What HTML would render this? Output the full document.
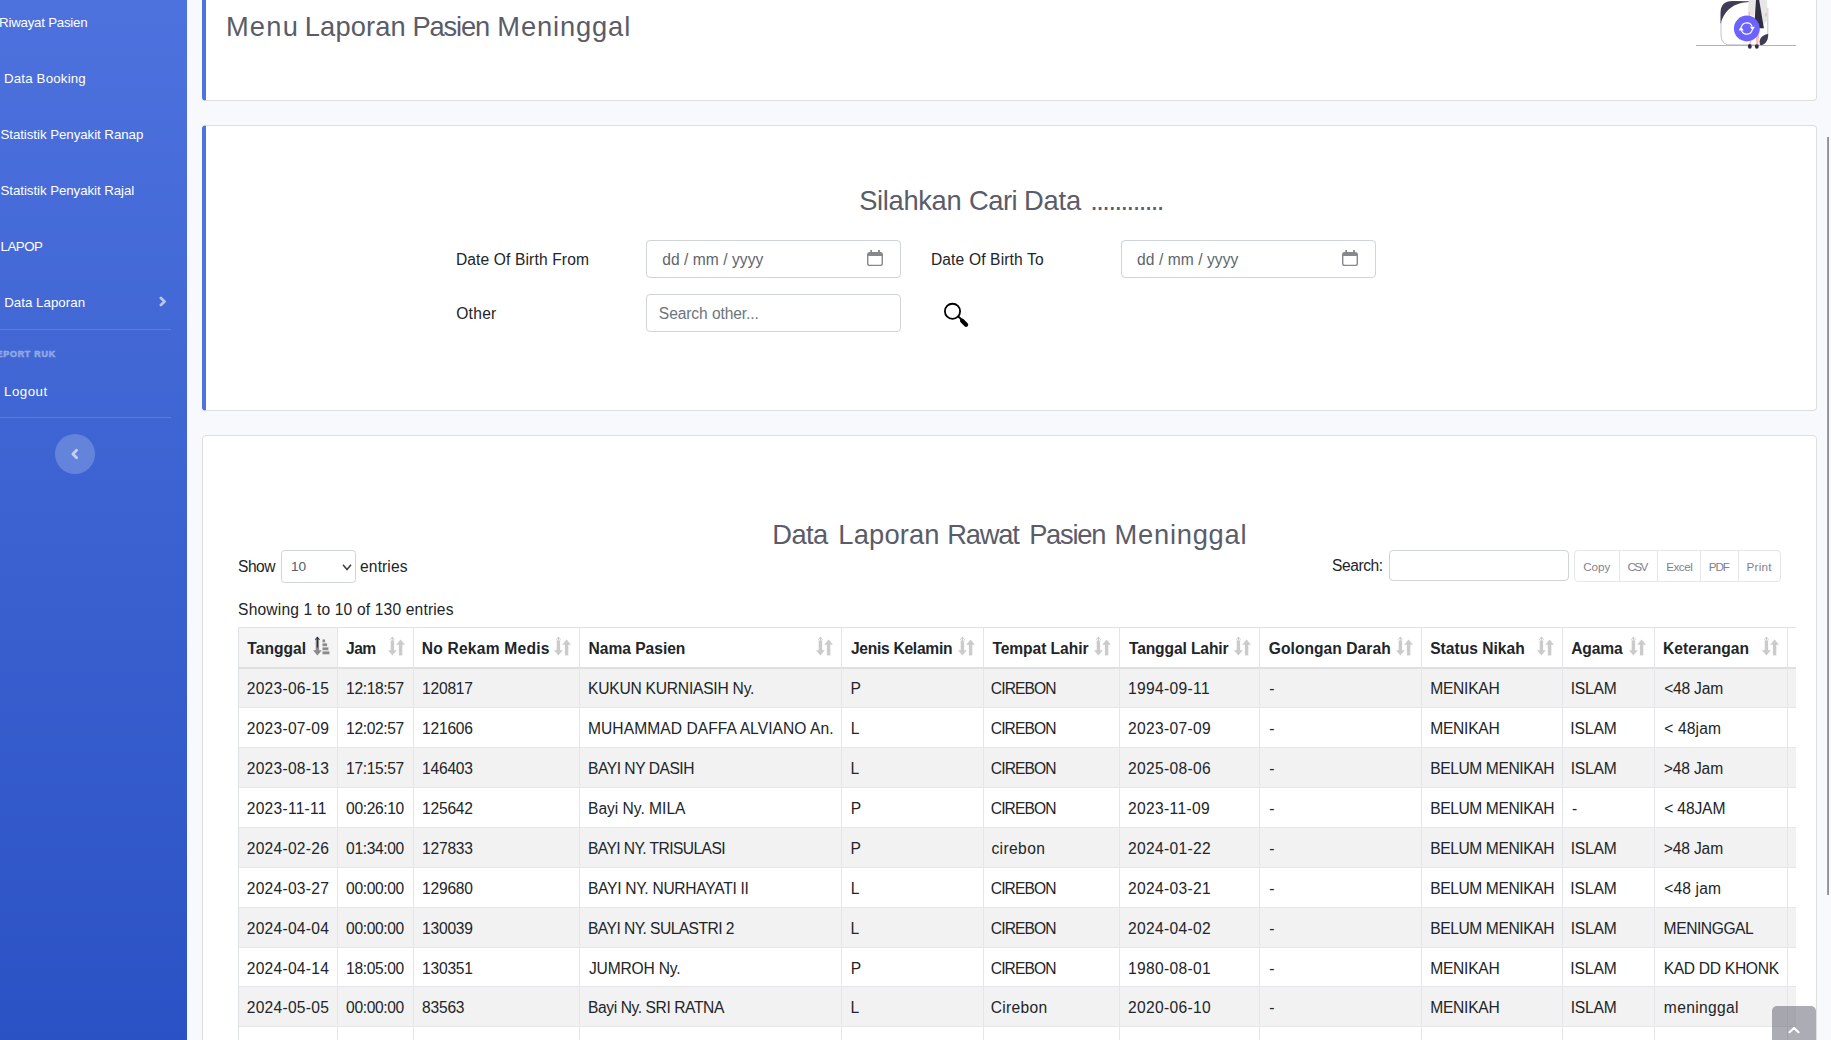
<!DOCTYPE html>
<html lang="id">
<head>
<meta charset="utf-8">
<title>Menu Laporan Pasien Meninggal</title>
<style>
*{box-sizing:border-box}
html,body{margin:0;padding:0}
body{width:1831px;height:1040px;overflow:hidden;background:#f8f9fc;font-family:"Liberation Sans",sans-serif;color:#212529;position:relative;font-size:15.6px}
#sidebar{position:absolute;left:0;top:0;width:187px;height:1040px;background:linear-gradient(180deg,#4d72de 0%,#2b52c4 100%);overflow:hidden}
#sidebar .item{position:absolute;left:0;color:#fff;font-size:13.3px;white-space:nowrap;line-height:20px;height:20px}
#sidebar hr{position:absolute;left:0;width:171px;margin:0;border:0;border-top:1px solid rgba(255,255,255,.15)}
#sidebar .heading{position:absolute;left:-10.6px;top:347.5px;font-size:8.9px;font-weight:700;color:#fff;-webkit-text-stroke:.5px #fff;opacity:.42;letter-spacing:.78px;line-height:12px;white-space:nowrap}
#toggle{position:absolute;left:55px;top:434px;width:40px;height:40px;border-radius:50%;background:rgba(255,255,255,.2)}
.card{position:absolute;background:#fff;border:1px solid #dedede;border-radius:4px}
.card.bl{border-left:4px solid #4e73df}
h3{margin:0;font-weight:400;color:#5a5c69;font-size:27.3px;line-height:34px;white-space:nowrap;position:absolute}
.lbl{position:absolute;font-size:15.6px;line-height:24px;white-space:nowrap;color:#212529}
.inp{position:absolute;height:38px;width:255px;border:1px solid #ced4da;border-radius:4px;background:#fff;color:#5f646b;font-size:15.6px;line-height:38px;padding-left:15px;white-space:nowrap}

#tw{position:absolute;left:238px;top:627px;width:1558px;height:420px;overflow:hidden}
#dt{border-collapse:separate;border-spacing:0;table-layout:fixed;width:1662px;font-size:15.6px;color:#212529}
#dt th,#dt td{padding:0 0 0 8px;border-left:1px solid #e4e6e9;border-top:1px solid #e4e6e9;white-space:nowrap;overflow:visible;text-align:left}
#dt th{height:40px;border-top:1px solid #dee2e6;font-weight:700;position:relative;line-height:37px;padding-top:2px}
#dt th.sorted{background:#f5f5f5}
#dt td{height:40px;line-height:39px}
#dt tr.first td{border-top:2px solid #dedfe0;line-height:38px}
#dt tr.short td{height:39px;line-height:37px}
#dt tr.odd td{background:#f2f2f2}
#dt td .f{top:1px}
#dt th:first-child,#dt td:first-child{border-left:1px solid #dee2e6}
#dt th .so{position:absolute;right:7px;top:7.5px}
#dt th.sorted .so{right:6.2px}

.ctl{position:absolute;font-size:15.6px;line-height:24px;white-space:nowrap;color:#212529}
#len{position:absolute;left:281px;top:550px;width:75px;height:33px;border:1px solid #ced4da;border-radius:3.5px;background:#fff;color:#5a5d68;font-size:13.7px;line-height:32px;padding-left:9px}
#sinp{position:absolute;left:1389px;top:550px;width:180px;height:31px;border:1px solid #ced4da;border-radius:4px;background:#fff}
#btns{position:absolute;left:1574px;top:550px;width:207px;height:32px;border:1px solid #e3e6ea;border-radius:4px;background:#fff;font-size:11.7px;color:#7f8190}
#btns span{position:absolute;top:0;height:30px;line-height:32px;border-left:1px solid #e3e6ea;text-align:center}
#btns span:first-child{border-left:0}
.cal{position:absolute}
#totop{position:absolute;left:1772px;top:1006px;width:44px;height:44px;border-radius:5px;background:rgba(90,92,105,.5)}
#sb{position:absolute;left:1827px;top:137px;width:2px;height:758px;background:linear-gradient(90deg,#a19c94 0,#a19c94 50%,#8f9195 50%,#8f9195 100%)}
.f{display:inline-block;position:relative;white-space:pre}
#btns span.f{position:relative;border:0;top:auto;height:auto;line-height:inherit}
</style>
</head>
<body>
<div id="sidebar">
  <div class="item" style="top:13px;left:0"><span class="f" style="letter-spacing:-0.243px;left:-0.90px">Riwayat Pasien</span></div>
  <div class="item" style="top:69px;left:5px"><span class="f" style="letter-spacing:0.183px;left:-1.10px">Data Booking</span></div>
  <div class="item" style="top:125px;left:1px"><span class="f" style="letter-spacing:-0.055px;left:-0.57px">Statistik Penyakit Ranap</span></div>
  <div class="item" style="top:181px;left:1px"><span class="f" style="letter-spacing:-0.068px;left:-0.44px">Statistik Penyakit Rajal</span></div>
  <div class="item" style="top:237px;left:1px"><span class="f" style="letter-spacing:-0.489px;left:-0.47px">LAPOP</span></div>
  <div class="item" style="top:293px;left:5px"><span class="f" style="letter-spacing:0.028px;left:-0.87px">Data Laporan</span></div>
  <svg style="position:absolute;left:159px;top:296px" width="9" height="11" viewBox="0 0 9 11"><path d="M1.9 2 L5.5 5.5 L1.9 9" fill="none" stroke="rgba(255,255,255,.62)" stroke-width="2.7" stroke-linecap="round" stroke-linejoin="round"/></svg>
  <hr style="top:329px">
  <div class="heading">REPORT RUK</div>
  <div class="item" style="top:382px;left:5px"><span class="f" style="letter-spacing:0.481px;left:-0.99px">Logout</span></div>
  <hr style="top:417px">
  <div id="toggle"><svg style="position:absolute;left:15px;top:14px" width="9" height="12" viewBox="0 0 9 12"><path d="M6.6 2.3 L2.9 6 L6.6 9.7" fill="none" stroke="rgba(255,255,255,.62)" stroke-width="2.8" stroke-linecap="round" stroke-linejoin="round"/></svg></div>
</div>

<div class="card bl" style="left:202px;top:-40px;width:1615px;height:141px"></div>
<h3 style="left:227px;top:10px"><span class="f" style="letter-spacing:1.259px;left:-1.14px">Menu</span> <span class="f" style="letter-spacing:0.119px;left:-3.12px">Laporan</span> <span class="f" style="letter-spacing:-1.125px;left:-4.13px">Pasien</span> <span class="f" style="letter-spacing:0.862px;left:-3.51px">Meninggal</span></h3>

<div class="card bl" style="left:202px;top:125px;width:1615px;height:286px"></div>
<h3 style="left:859px;top:184px"><span class="f" style="letter-spacing:-0.319px;left:0.20px">Silahkan</span> <span class="f" style="letter-spacing:-0.544px;left:0.32px">Cari</span> <span class="f" style="letter-spacing:-0.189px;left:-0.19px">Data</span> <span class="f" style="letter-spacing:-1.529px;left:1.53px">............</span></h3>
<div class="lbl" style="left:456px;top:248px"><span class="f" style="letter-spacing:0.128px;left:-0.10px">Date Of Birth From</span></div>
<div class="inp" style="left:646px;top:240px"><span class="f" style="letter-spacing:0.044px;left:0.21px">dd / mm / yyyy</span></div>
<div class="lbl" style="left:931px;top:248px"><span class="f" style="letter-spacing:0.140px;left:-0.10px">Date Of Birth To</span></div>
<div class="inp" style="left:1121px;top:240px"><span class="f" style="letter-spacing:0.055px;left:0.10px">dd / mm / yyyy</span></div>
<div class="lbl" style="left:456px;top:302px"><span class="f" style="letter-spacing:0.271px;left:0.22px">Other</span></div>
<div class="inp" style="left:646px;top:294px;padding-left:12px;color:#6c757d"><span class="f" style="letter-spacing:-0.099px;left:-0.18px">Search other...</span></div>

<div class="card" style="left:202px;top:435px;width:1615px;height:700px"></div>
<h3 style="left:773px;top:518px"><span class="f" style="letter-spacing:-0.596px;left:-0.67px">Data</span> <span class="f" style="letter-spacing:0.168px;left:2.49px">Laporan</span> <span class="f" style="letter-spacing:-1.176px;left:2.30px">Rawat</span> <span class="f" style="letter-spacing:-1.244px;left:5.22px">Pasien</span> <span class="f" style="letter-spacing:0.754px;left:7.01px">Meninggal</span></h3>
<div id="tw"><table id="dt"><colgroup>
<col style="width:99px">
<col style="width:76px">
<col style="width:166px">
<col style="width:262px">
<col style="width:142px">
<col style="width:136px">
<col style="width:140px">
<col style="width:162px">
<col style="width:141px">
<col style="width:92px">
<col style="width:133px">
<col style="width:113px">
</colgroup><thead><tr>
<th class="sorted"><span class="f" style="letter-spacing:0.024px;left:0.31px">Tanggal</span><svg class="so" width="18" height="20" viewBox="0 0 18 20"><g fill="#8a8a8a"><rect x="2.7" y="2.5" width="3.4" height="12.5"/><path d="M0 14.3 H8.8 L4.4 19.4z"/><rect x="9.5" y="3.5" width="2.6" height="2.8"/><rect x="9.5" y="7.4" width="4.6" height="2.8"/><rect x="9.5" y="11.4" width="5.9" height="2.8"/><rect x="9.5" y="15.4" width="6.9" height="2.9"/></g><g fill="#1a2a3a"><rect x="3.9" y="1" width="1" height="10.5"/><path d="M1.9 3.4 L4.4 .4 L6.9 3.4 L6.3 3.9 L4.4 1.8 L2.5 3.9z"/></g></svg></th>
<th><span class="f" style="letter-spacing:-0.557px;left:0.05px">Jam</span><svg class="so" width="18" height="20" viewBox="0 0 18 20"><g fill="#000" opacity=".2"><rect x="3.9" y="1.2" width="1" height="10"/><path d="M1.9 3.6 L4.4 .6 L6.9 3.6 L6.3 4.1 L4.4 2 L2.5 4.1z"/><rect x="2.7" y="4.5" width="3.4" height="10.5"/><path d="M0 14.3 H8.8 L4.4 19.4z"/><rect x="10.9" y="8" width="3.4" height="11.4"/><path d="M8.2 8.7 H17 L12.6 3.4z"/></g></svg></th>
<th><span class="f" style="letter-spacing:0.236px;left:-0.36px">No Rekam Medis</span><svg class="so" width="18" height="20" viewBox="0 0 18 20"><g fill="#000" opacity=".2"><rect x="3.9" y="1.2" width="1" height="10"/><path d="M1.9 3.6 L4.4 .6 L6.9 3.6 L6.3 4.1 L4.4 2 L2.5 4.1z"/><rect x="2.7" y="4.5" width="3.4" height="10.5"/><path d="M0 14.3 H8.8 L4.4 19.4z"/><rect x="10.9" y="8" width="3.4" height="11.4"/><path d="M8.2 8.7 H17 L12.6 3.4z"/></g></svg></th>
<th><span class="f" style="letter-spacing:-0.033px;left:0.61px">Nama Pasien</span><svg class="so" width="18" height="20" viewBox="0 0 18 20"><g fill="#000" opacity=".2"><rect x="3.9" y="1.2" width="1" height="10"/><path d="M1.9 3.6 L4.4 .6 L6.9 3.6 L6.3 4.1 L4.4 2 L2.5 4.1z"/><rect x="2.7" y="4.5" width="3.4" height="10.5"/><path d="M0 14.3 H8.8 L4.4 19.4z"/><rect x="10.9" y="8" width="3.4" height="11.4"/><path d="M8.2 8.7 H17 L12.6 3.4z"/></g></svg></th>
<th><span class="f" style="letter-spacing:-0.277px;left:0.93px">Jenis Kelamin</span><svg class="so" width="18" height="20" viewBox="0 0 18 20"><g fill="#000" opacity=".2"><rect x="3.9" y="1.2" width="1" height="10"/><path d="M1.9 3.6 L4.4 .6 L6.9 3.6 L6.3 4.1 L4.4 2 L2.5 4.1z"/><rect x="2.7" y="4.5" width="3.4" height="10.5"/><path d="M0 14.3 H8.8 L4.4 19.4z"/><rect x="10.9" y="8" width="3.4" height="11.4"/><path d="M8.2 8.7 H17 L12.6 3.4z"/></g></svg></th>
<th><span class="f" style="letter-spacing:-0.056px;left:0.38px">Tempat Lahir</span><svg class="so" width="18" height="20" viewBox="0 0 18 20"><g fill="#000" opacity=".2"><rect x="3.9" y="1.2" width="1" height="10"/><path d="M1.9 3.6 L4.4 .6 L6.9 3.6 L6.3 4.1 L4.4 2 L2.5 4.1z"/><rect x="2.7" y="4.5" width="3.4" height="10.5"/><path d="M0 14.3 H8.8 L4.4 19.4z"/><rect x="10.9" y="8" width="3.4" height="11.4"/><path d="M8.2 8.7 H17 L12.6 3.4z"/></g></svg></th>
<th><span class="f" style="letter-spacing:-0.115px;left:0.90px">Tanggal Lahir</span><svg class="so" width="18" height="20" viewBox="0 0 18 20"><g fill="#000" opacity=".2"><rect x="3.9" y="1.2" width="1" height="10"/><path d="M1.9 3.6 L4.4 .6 L6.9 3.6 L6.3 4.1 L4.4 2 L2.5 4.1z"/><rect x="2.7" y="4.5" width="3.4" height="10.5"/><path d="M0 14.3 H8.8 L4.4 19.4z"/><rect x="10.9" y="8" width="3.4" height="11.4"/><path d="M8.2 8.7 H17 L12.6 3.4z"/></g></svg></th>
<th><span class="f" style="letter-spacing:0.047px;left:0.78px">Golongan Darah</span><svg class="so" width="18" height="20" viewBox="0 0 18 20"><g fill="#000" opacity=".2"><rect x="3.9" y="1.2" width="1" height="10"/><path d="M1.9 3.6 L4.4 .6 L6.9 3.6 L6.3 4.1 L4.4 2 L2.5 4.1z"/><rect x="2.7" y="4.5" width="3.4" height="10.5"/><path d="M0 14.3 H8.8 L4.4 19.4z"/><rect x="10.9" y="8" width="3.4" height="11.4"/><path d="M8.2 8.7 H17 L12.6 3.4z"/></g></svg></th>
<th><span class="f" style="letter-spacing:0.010px;left:0.19px">Status Nikah</span><svg class="so" width="18" height="20" viewBox="0 0 18 20"><g fill="#000" opacity=".2"><rect x="3.9" y="1.2" width="1" height="10"/><path d="M1.9 3.6 L4.4 .6 L6.9 3.6 L6.3 4.1 L4.4 2 L2.5 4.1z"/><rect x="2.7" y="4.5" width="3.4" height="10.5"/><path d="M0 14.3 H8.8 L4.4 19.4z"/><rect x="10.9" y="8" width="3.4" height="11.4"/><path d="M8.2 8.7 H17 L12.6 3.4z"/></g></svg></th>
<th><span class="f" style="letter-spacing:-0.168px;left:0.26px">Agama</span><svg class="so" width="18" height="20" viewBox="0 0 18 20"><g fill="#000" opacity=".2"><rect x="3.9" y="1.2" width="1" height="10"/><path d="M1.9 3.6 L4.4 .6 L6.9 3.6 L6.3 4.1 L4.4 2 L2.5 4.1z"/><rect x="2.7" y="4.5" width="3.4" height="10.5"/><path d="M0 14.3 H8.8 L4.4 19.4z"/><rect x="10.9" y="8" width="3.4" height="11.4"/><path d="M8.2 8.7 H17 L12.6 3.4z"/></g></svg></th>
<th><span class="f" style="letter-spacing:0.011px;left:0.07px">Keterangan</span><svg class="so" width="18" height="20" viewBox="0 0 18 20"><g fill="#000" opacity=".2"><rect x="3.9" y="1.2" width="1" height="10"/><path d="M1.9 3.6 L4.4 .6 L6.9 3.6 L6.3 4.1 L4.4 2 L2.5 4.1z"/><rect x="2.7" y="4.5" width="3.4" height="10.5"/><path d="M0 14.3 H8.8 L4.4 19.4z"/><rect x="10.9" y="8" width="3.4" height="11.4"/><path d="M8.2 8.7 H17 L12.6 3.4z"/></g></svg></th>
<th></th>
</tr></thead><tbody>
<tr class="odd first">
<td><span class="f" style="letter-spacing:0.259px;left:-0.30px">2023-06-15</span></td>
<td><span class="f" style="letter-spacing:-0.369px;left:0.10px">12:18:57</span></td>
<td><span class="f" style="letter-spacing:-0.210px;left:0.00px">120817</span></td>
<td><span class="f" style="letter-spacing:-0.222px;left:0.00px">KUKUN KURNIASIH Ny.</span></td>
<td><span class="f" style="letter-spacing:0.000px;left:0.62px">P</span></td>
<td><span class="f" style="letter-spacing:-0.894px;left:-1.18px">CIREBON</span></td>
<td><span class="f" style="letter-spacing:0.331px;left:0.02px">1994-09-11</span></td>
<td><span class="f" style="letter-spacing:0.000px;left:1.17px">-</span></td>
<td><span class="f" style="letter-spacing:-0.271px;left:0.28px">MENIKAH</span></td>
<td><span class="f" style="letter-spacing:-0.189px;left:-0.34px">ISLAM</span></td>
<td><span class="f" style="letter-spacing:-0.210px;left:1.17px">&lt;48 Jam</span></td>
<td></td></tr>
<tr class="">
<td><span class="f" style="letter-spacing:0.259px;left:-0.30px">2023-07-09</span></td>
<td><span class="f" style="letter-spacing:-0.369px;left:0.10px">12:02:57</span></td>
<td><span class="f" style="letter-spacing:-0.210px;left:0.00px">121606</span></td>
<td><span class="f" style="letter-spacing:0.059px;left:0.00px">MUHAMMAD DAFFA ALVIANO An.</span></td>
<td><span class="f" style="letter-spacing:0.000px;left:0.63px">L</span></td>
<td><span class="f" style="letter-spacing:-0.911px;left:-1.18px">CIREBON</span></td>
<td><span class="f" style="letter-spacing:0.331px;left:0.02px">2023-07-09</span></td>
<td><span class="f" style="letter-spacing:0.000px;left:1.21px">-</span></td>
<td><span class="f" style="letter-spacing:-0.269px;left:0.28px">MENIKAH</span></td>
<td><span class="f" style="letter-spacing:-0.074px;left:-0.77px">ISLAM</span></td>
<td><span class="f" style="letter-spacing:0.142px;left:1.20px">&lt; 48jam</span></td>
<td></td></tr>
<tr class="odd">
<td><span class="f" style="letter-spacing:0.259px;left:-0.30px">2023-08-13</span></td>
<td><span class="f" style="letter-spacing:-0.369px;left:0.10px">17:15:57</span></td>
<td><span class="f" style="letter-spacing:-0.210px;left:0.00px">146403</span></td>
<td><span class="f" style="letter-spacing:-0.470px;left:0.00px">BAYI NY DASIH</span></td>
<td><span class="f" style="letter-spacing:0.000px;left:0.62px">L</span></td>
<td><span class="f" style="letter-spacing:-0.894px;left:-1.18px">CIREBON</span></td>
<td><span class="f" style="letter-spacing:0.331px;left:0.02px">2025-08-06</span></td>
<td><span class="f" style="letter-spacing:0.000px;left:1.17px">-</span></td>
<td><span class="f" style="letter-spacing:-0.415px;left:0.28px">BELUM MENIKAH</span></td>
<td><span class="f" style="letter-spacing:-0.189px;left:-0.34px">ISLAM</span></td>
<td><span class="f" style="letter-spacing:-0.164px;left:0.86px">&gt;48 Jam</span></td>
<td></td></tr>
<tr class="">
<td><span class="f" style="letter-spacing:0.259px;left:-0.30px">2023-11-11</span></td>
<td><span class="f" style="letter-spacing:-0.369px;left:0.10px">00:26:10</span></td>
<td><span class="f" style="letter-spacing:-0.210px;left:0.00px">125642</span></td>
<td><span class="f" style="letter-spacing:-0.014px;left:0.00px">Bayi Ny. MILA</span></td>
<td><span class="f" style="letter-spacing:0.000px;left:0.63px">P</span></td>
<td><span class="f" style="letter-spacing:-0.911px;left:-1.18px">CIREBON</span></td>
<td><span class="f" style="letter-spacing:0.331px;left:0.02px">2023-11-09</span></td>
<td><span class="f" style="letter-spacing:0.000px;left:1.21px">-</span></td>
<td><span class="f" style="letter-spacing:-0.415px;left:0.28px">BELUM MENIKAH</span></td>
<td><span class="f" style="letter-spacing:0.000px;left:0.94px">-</span></td>
<td><span class="f" style="letter-spacing:-0.129px;left:1.20px">&lt; 48JAM</span></td>
<td></td></tr>
<tr class="odd">
<td><span class="f" style="letter-spacing:0.259px;left:-0.30px">2024-02-26</span></td>
<td><span class="f" style="letter-spacing:-0.369px;left:0.10px">01:34:00</span></td>
<td><span class="f" style="letter-spacing:-0.210px;left:0.00px">127833</span></td>
<td><span class="f" style="letter-spacing:-0.576px;left:0.00px">BAYI NY. TRISULASI</span></td>
<td><span class="f" style="letter-spacing:0.000px;left:0.62px">P</span></td>
<td><span class="f" style="letter-spacing:0.391px;left:-0.64px">cirebon</span></td>
<td><span class="f" style="letter-spacing:0.331px;left:0.02px">2024-01-22</span></td>
<td><span class="f" style="letter-spacing:0.000px;left:1.17px">-</span></td>
<td><span class="f" style="letter-spacing:-0.415px;left:0.28px">BELUM MENIKAH</span></td>
<td><span class="f" style="letter-spacing:-0.189px;left:-0.34px">ISLAM</span></td>
<td><span class="f" style="letter-spacing:-0.164px;left:0.86px">&gt;48 Jam</span></td>
<td></td></tr>
<tr class="">
<td><span class="f" style="letter-spacing:0.259px;left:-0.30px">2024-03-27</span></td>
<td><span class="f" style="letter-spacing:-0.369px;left:0.10px">00:00:00</span></td>
<td><span class="f" style="letter-spacing:-0.210px;left:0.00px">129680</span></td>
<td><span class="f" style="letter-spacing:-0.289px;left:0.00px">BAYI NY. NURHAYATI II</span></td>
<td><span class="f" style="letter-spacing:0.000px;left:0.63px">L</span></td>
<td><span class="f" style="letter-spacing:-0.911px;left:-1.18px">CIREBON</span></td>
<td><span class="f" style="letter-spacing:0.331px;left:0.02px">2024-03-21</span></td>
<td><span class="f" style="letter-spacing:0.000px;left:1.21px">-</span></td>
<td><span class="f" style="letter-spacing:-0.415px;left:0.28px">BELUM MENIKAH</span></td>
<td><span class="f" style="letter-spacing:-0.074px;left:-0.77px">ISLAM</span></td>
<td><span class="f" style="letter-spacing:0.142px;left:1.20px">&lt;48 jam</span></td>
<td></td></tr>
<tr class="odd">
<td><span class="f" style="letter-spacing:0.259px;left:-0.30px">2024-04-04</span></td>
<td><span class="f" style="letter-spacing:-0.369px;left:0.10px">00:00:00</span></td>
<td><span class="f" style="letter-spacing:-0.210px;left:0.00px">130039</span></td>
<td><span class="f" style="letter-spacing:-0.549px;left:0.00px">BAYI NY. SULASTRI 2</span></td>
<td><span class="f" style="letter-spacing:0.000px;left:0.62px">L</span></td>
<td><span class="f" style="letter-spacing:-0.894px;left:-1.18px">CIREBON</span></td>
<td><span class="f" style="letter-spacing:0.331px;left:0.02px">2024-04-02</span></td>
<td><span class="f" style="letter-spacing:0.000px;left:1.17px">-</span></td>
<td><span class="f" style="letter-spacing:-0.415px;left:0.28px">BELUM MENIKAH</span></td>
<td><span class="f" style="letter-spacing:-0.189px;left:-0.34px">ISLAM</span></td>
<td><span class="f" style="letter-spacing:-0.432px;left:0.62px">MENINGGAL</span></td>
<td></td></tr>
<tr class="short">
<td><span class="f" style="letter-spacing:0.259px;left:-0.30px">2024-04-14</span></td>
<td><span class="f" style="letter-spacing:-0.369px;left:0.10px">18:05:00</span></td>
<td><span class="f" style="letter-spacing:-0.210px;left:0.00px">130351</span></td>
<td><span class="f" style="letter-spacing:-0.181px;left:1.00px">JUMROH Ny.</span></td>
<td><span class="f" style="letter-spacing:0.000px;left:0.63px">P</span></td>
<td><span class="f" style="letter-spacing:-0.911px;left:-1.18px">CIREBON</span></td>
<td><span class="f" style="letter-spacing:0.331px;left:0.02px">1980-08-01</span></td>
<td><span class="f" style="letter-spacing:0.000px;left:1.21px">-</span></td>
<td><span class="f" style="letter-spacing:-0.269px;left:0.28px">MENIKAH</span></td>
<td><span class="f" style="letter-spacing:-0.074px;left:-0.77px">ISLAM</span></td>
<td><span class="f" style="letter-spacing:-0.299px;left:0.63px">KAD DD KHONK</span></td>
<td></td></tr>
<tr class="odd">
<td><span class="f" style="letter-spacing:0.259px;left:-0.30px">2024-05-05</span></td>
<td><span class="f" style="letter-spacing:-0.369px;left:0.10px">00:00:00</span></td>
<td><span class="f" style="letter-spacing:-0.210px;left:0.00px">83563</span></td>
<td><span class="f" style="letter-spacing:-0.408px;left:0.00px">Bayi Ny. SRI RATNA</span></td>
<td><span class="f" style="letter-spacing:0.000px;left:0.62px">L</span></td>
<td><span class="f" style="letter-spacing:0.282px;left:-1.18px">Cirebon</span></td>
<td><span class="f" style="letter-spacing:0.331px;left:0.02px">2020-06-10</span></td>
<td><span class="f" style="letter-spacing:0.000px;left:1.17px">-</span></td>
<td><span class="f" style="letter-spacing:-0.271px;left:0.28px">MENIKAH</span></td>
<td><span class="f" style="letter-spacing:-0.189px;left:-0.34px">ISLAM</span></td>
<td><span class="f" style="letter-spacing:0.335px;left:0.85px">meninggal</span></td>
<td></td></tr>
<tr class="">
<td></td>
<td></td>
<td></td>
<td></td>
<td></td>
<td></td>
<td></td>
<td></td>
<td></td>
<td></td>
<td></td>
<td></td></tr>
</tbody></table></div>

<div class="ctl" style="left:238px;top:555px"><span class="f" style="letter-spacing:-0.544px;left:0.12px">Show</span></div>
<div id="len">10<svg style="position:absolute;left:59.5px;top:13px" width="10" height="8" viewBox="0 0 10 8"><path d="M1 .8 L5 5.6 L9 .8" fill="none" stroke="#3b3e44" stroke-width="1.5"/></svg></div>
<div class="ctl" style="left:361px;top:555px"><span class="f" style="letter-spacing:0.094px;left:-0.92px">entries</span></div>
<div class="ctl" style="left:1332px;top:554px"><span class="f" style="letter-spacing:-0.427px;left:-0.08px">Search:</span></div>
<div id="sinp"></div>
<div id="btns"><span style="left:0;width:44px"><span class="f" style="letter-spacing:-0.069px;left:-0.32px">Copy</span></span><span style="left:44px;width:38px"><span class="f" style="letter-spacing:-1.650px;left:-1.38px">CSV</span></span><span style="left:82px;width:43px"><span class="f" style="letter-spacing:-0.491px;left:0.21px">Excel</span></span><span style="left:125px;width:38px"><span class="f" style="letter-spacing:-1.076px;left:-0.65px">PDF</span></span><span style="left:163px;width:42px"><span class="f" style="letter-spacing:0.274px;left:-0.32px">Print</span></span></div>
<div class="ctl" style="left:238px;top:598px"><span class="f" style="letter-spacing:0.163px;left:0.12px">Showing 1 to 10 of 130 entries</span></div>
<svg class="cal" style="left:866px;top:249px" width="18" height="18" viewBox="0 0 18 18"><g fill="none" stroke="#85888d" stroke-width="1.4"><rect x="1.7" y="3.6" width="14.6" height="12.8" rx="2.2"/></g><path d="M1.7 5.8 Q1.7 3.6 3.9 3.6 H14.1 Q16.3 3.6 16.3 5.8 V6.9 H1.7z" fill="#85888d"/><rect x="4.3" y="1" width="1.7" height="3" fill="#85888d"/><rect x="12.1" y="1" width="1.8" height="3" fill="#85888d"/></svg>
<svg class="cal" style="left:1341px;top:249px" width="18" height="18" viewBox="0 0 18 18"><g fill="none" stroke="#85888d" stroke-width="1.4"><rect x="1.7" y="3.6" width="14.6" height="12.8" rx="2.2"/></g><path d="M1.7 5.8 Q1.7 3.6 3.9 3.6 H14.1 Q16.3 3.6 16.3 5.8 V6.9 H1.7z" fill="#85888d"/><rect x="4.3" y="1" width="1.7" height="3" fill="#85888d"/><rect x="12.1" y="1" width="1.8" height="3" fill="#85888d"/></svg>
<svg style="position:absolute;left:940px;top:300px" width="32" height="30" viewBox="940 300 32 30"><circle cx="952.5" cy="311.35" r="7.6" fill="none" stroke="#000" stroke-width="1.8"/><path d="M958.2 316.4 L961.5 319.5" stroke="#000" stroke-width="1.9" fill="none"/><path d="M962.1 320.7 L966.1 324.8" stroke="#000" stroke-width="4.2" stroke-linecap="round" fill="none"/></svg>
<svg style="position:absolute;left:1690px;top:0" width="110" height="60" viewBox="1690 0 110 60">
<path d="M1720.5 24 L1720.5 13 Q1720.5 1 1732.5 1 L1749 1.2 L1749 1.9 C1737 2.6 1726 7 1721.2 22 L1720.5 24z" fill="#3f3d56"/>
<path d="M1721 22 V35 Q1721 45.3 1731.5 45.3 H1758 Q1767.8 45.3 1767.8 35 V8" fill="none" stroke="#3f3d56" stroke-opacity=".35" stroke-width=".9"/>
<path d="M1729 45.3 H1759" stroke="#3f3d56" stroke-opacity=".7" stroke-width="1"/>
<path d="M1768.2 34 C1763 34.6 1759.5 38 1759.6 42 C1759.7 43.6 1760 44.6 1760.5 45.3 C1765 44.8 1768.2 41 1768.2 34z" fill="#3f3d56"/>
<path d="M1696 45.5 H1796" stroke="#b3b1c1" stroke-width="1"/>
<path d="M1748.8 0 H1766.8 C1767.6 6 1767.8 13 1767.2 20 L1763.5 25 L1759 10 L1756 0 L1754 16 L1748.3 15 C1748 10 1748.3 5 1748.8 0z" fill="#e6e6e6"/>
<path d="M1756 0 H1759.2 L1763.5 26 L1764 28.3 L1754.3 28.3 C1754.8 20 1755.3 8 1756 0z" fill="#2f2e41"/>
<rect x="1748.6" y="12" width="1.5" height="5" fill="#ffb8b8"/>
<ellipse cx="1766" cy="14.7" rx="1" ry="1.9" fill="#ffb8b8"/>
<path d="M1756.1 28 H1759.8 L1758.2 44.6 H1756.1z" fill="#ffb8b8"/>
<path d="M1750 40 L1751.6 40.5 L1750.4 45 L1749 45z" fill="#ffb8b8"/>
<ellipse cx="1749.8" cy="46.4" rx="1.9" ry="2.3" fill="#2f2e41"/>
<ellipse cx="1756.8" cy="46.5" rx="1.9" ry="2.3" fill="#2f2e41"/>
<circle cx="1746.8" cy="28.5" r="12.9" fill="#6c63ff"/>
<g fill="none" stroke="#fff" stroke-width="1.15">
<path d="M1741.4 27.2 A5.6 5.6 0 0 1 1752.1 26.6"/>
<path d="M1752.2 29.9 A5.6 5.6 0 0 1 1741.5 30.5"/>
</g>
<path d="M1749.9 26.7 L1754.9 26.7 L1752.6 30.6z" fill="#fff"/>
<path d="M1743.7 30.4 L1738.7 30.4 L1741 26.5z" fill="#fff"/>
</svg>
<div id="totop"><svg style="position:absolute;left:16px;top:20px" width="12" height="8" viewBox="0 0 12 8"><path d="M1.5 6.2 L6 2 L10.5 6.2" fill="none" stroke="#fff" stroke-width="2.2" stroke-linecap="round" stroke-linejoin="round"/></svg></div>
<div id="sb"></div>
</body>
</html>
